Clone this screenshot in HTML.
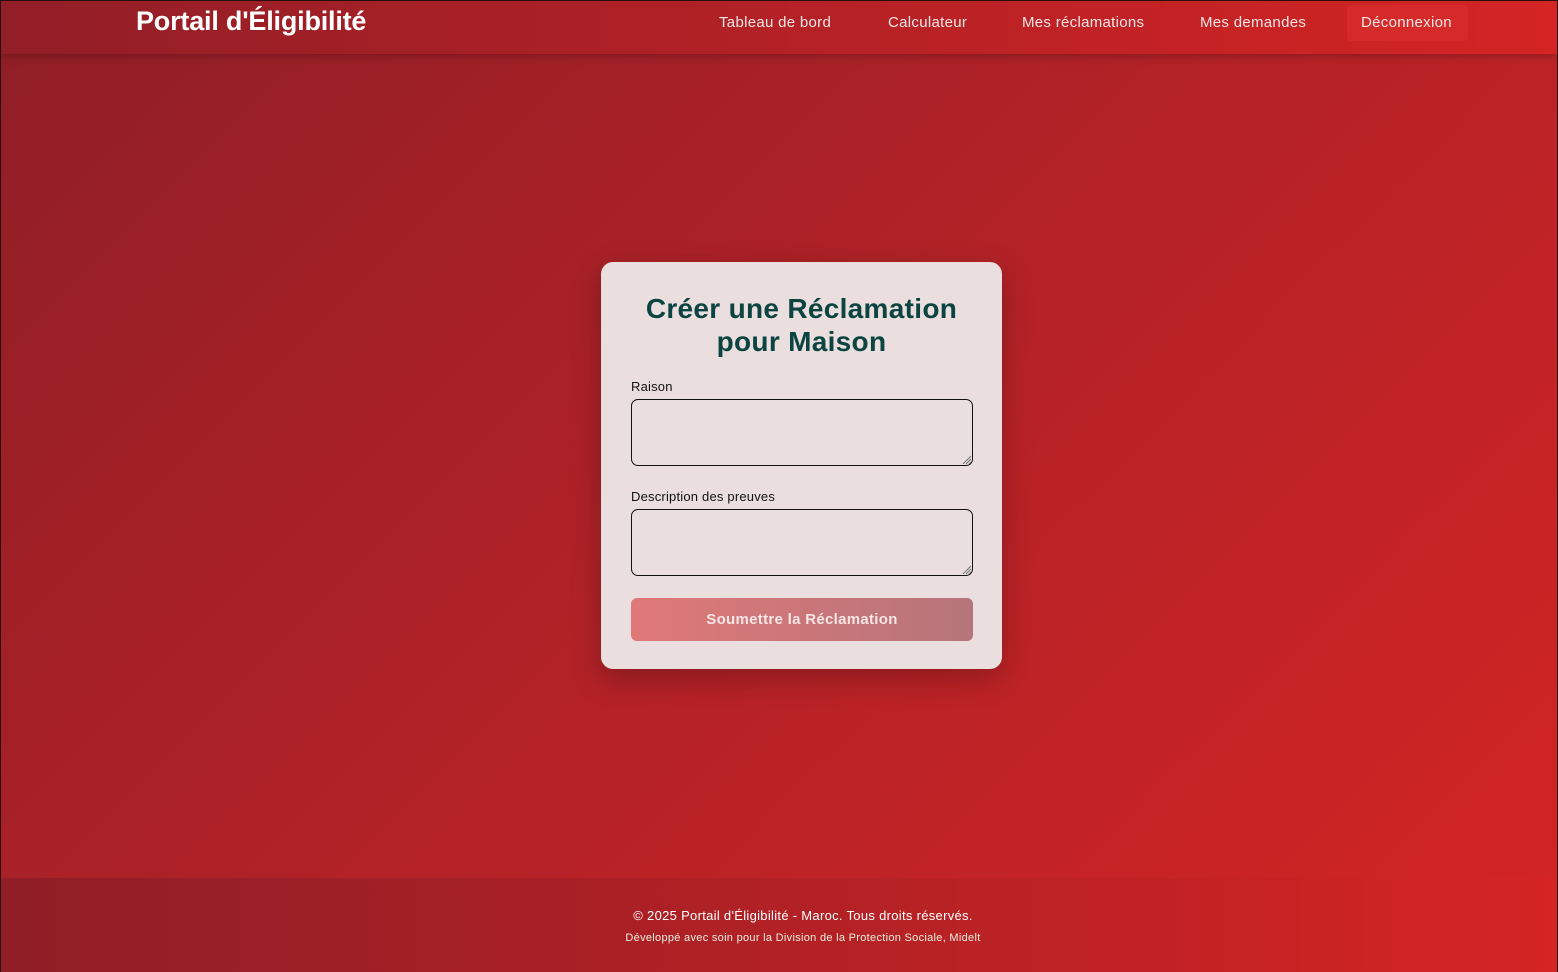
<!DOCTYPE html>
<html><head><meta charset="utf-8"><style>
*{box-sizing:border-box;margin:0;padding:0}
html,body{width:1558px;height:972px;overflow:hidden}
body{font-family:"Liberation Sans",sans-serif;background:linear-gradient(135deg,#8f1e26 0%,#b32227 50%,#d42424 100%);border:1px solid #2a1010;position:relative}
.nav{position:absolute;left:0;top:0;width:1556px;height:53px;background:linear-gradient(90deg,#921e27,#d42424);box-shadow:0 2px 8px rgba(0,0,0,.25)}
.logo{position:absolute;left:135px;top:5px;color:#fff;font-weight:bold;font-size:27px;letter-spacing:-0.2px}
.nav a{position:absolute;top:13px;color:#f2e6e6;font-size:15px;text-decoration:none;letter-spacing:0.3px}
.dc{position:absolute;left:1346px;top:4px;width:121px;height:36px;background:#d42a2a;border-radius:4px}
.card{position:absolute;left:600px;top:261px;width:401px;height:407px;background:#eadedf;border-radius:12px;box-shadow:0 10px 30px rgba(0,0,0,.25)}
h1{position:absolute;left:0;width:401px;top:30px;text-align:center;color:#0b4440;font-size:28px;line-height:33px;font-weight:bold;letter-spacing:0.3px}
.lbl{position:absolute;left:30px;font-size:13px;color:#111;letter-spacing:0.2px}
.ta{position:absolute;left:30px;width:342px;height:67px;border:1.5px solid #111;border-radius:7px}
.ta svg{position:absolute;right:1px;bottom:1px}
.btn{position:absolute;left:30px;top:336px;width:342px;height:43px;border-radius:6px;background:linear-gradient(90deg,#e07878,#b5757a);color:#f6e6e6;font-weight:bold;font-size:15px;text-align:center;line-height:43px;letter-spacing:0.3px}
.foot{position:absolute;left:0;top:877px;width:1556px;height:94px;background:linear-gradient(90deg,#8f1e26,#d42424);color:#fff}
.foot div{position:absolute;left:502px;width:600px;text-align:center}
</style></head><body>
<div class="nav">
<div class="logo">Portail d'Éligibilité</div>
<div class="dc"></div>
<a style="left:718px">Tableau de bord</a>
<a style="left:887px">Calculateur</a>
<a style="left:1021px">Mes réclamations</a>
<a style="left:1199px">Mes demandes</a>
<a style="left:1360px">Déconnexion</a>
</div>
<div class="card">
<h1>Créer une Réclamation<br>pour Maison</h1>
<div class="lbl" style="top:117px">Raison</div>
<div class="ta" style="top:137px"><svg width="9" height="9"><path d="M9 1L1 9M9 4L4 9M9 7L7 9" stroke="#777" stroke-width="1"/></svg></div>
<div class="lbl" style="top:227px">Description des preuves</div>
<div class="ta" style="top:247px"><svg width="9" height="9"><path d="M9 1L1 9M9 4L4 9M9 7L7 9" stroke="#777" stroke-width="1"/></svg></div>
<div class="btn">Soumettre la Réclamation</div>
</div>
<div class="foot">
<div style="top:30px;font-size:13px;letter-spacing:0.3px">© 2025 Portail d'Éligibilité - Maroc. Tous droits réservés.</div>
<div style="top:54px;font-size:11px;color:#eed;letter-spacing:0.3px">Développé avec soin pour la Division de la Protection Sociale, Midelt</div>
</div>
</body></html>
